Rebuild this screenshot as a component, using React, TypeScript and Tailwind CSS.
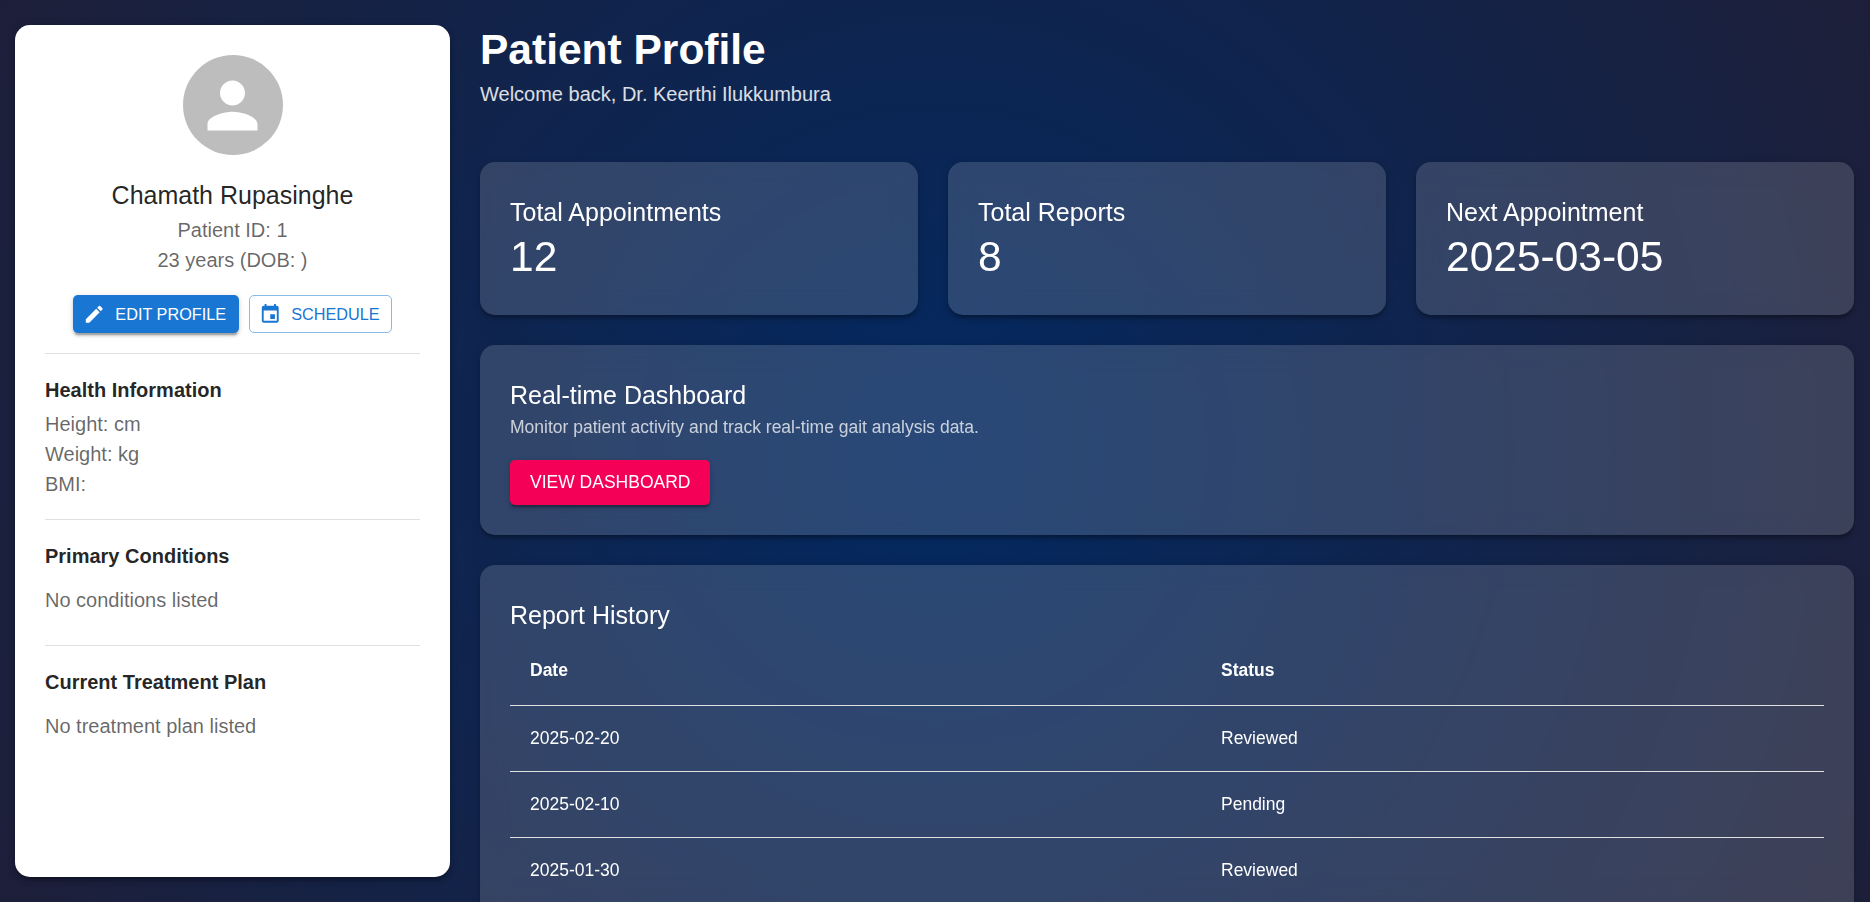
import React from "react";

const PAPER_SHADOW =
  "shadow-[0_3.75px_3.75px_-2.5px_rgba(0,0,0,0.2),0_3.75px_5px_0_rgba(0,0,0,0.14),0_1.25px_10px_0_rgba(0,0,0,0.12)]";
const BUTTON_SHADOW =
  "shadow-[0_3.75px_1.25px_-2.5px_rgba(0,0,0,0.2),0_2.5px_2.5px_0_rgba(0,0,0,0.14),0_1.25px_6.25px_0_rgba(0,0,0,0.12)]";

function Icon({ d, className }: { d: string; className: string }) {
  return (
    <svg viewBox="0 0 24 24" fill="currentColor" aria-hidden="true" className={className}>
      <path d={d} />
    </svg>
  );
}

const PERSON =
  "M12 12c2.21 0 4-1.79 4-4s-1.79-4-4-4-4 1.79-4 4 1.79 4 4 4m0 2c-2.67 0-8 1.34-8 4v2h16v-2c0-2.66-5.33-4-8-4";
const PENCIL =
  "M3 17.25V21h3.75L17.81 9.94l-3.75-3.75zM20.71 7.04c.39-.39.39-1.02 0-1.41l-2.34-2.34a.996.996 0 0 0-1.41 0l-1.83 1.83 3.75 3.75z";
const EVENT =
  "M17 12h-5v5h5zM16 1v2H8V1H6v2H5c-1.11 0-1.99.9-1.99 2L3 19c0 1.1.89 2 2 2h14c1.1 0 2-.9 2-2V5c0-1.1-.9-2-2-2h-1V1zm3 18H5V8h14z";

function Divider() {
  return <hr className="my-5 h-px shrink-0 border-0 bg-black/12" />;
}

function SectionTitle({ children }: { children: React.ReactNode }) {
  return (
    <h3 className="pb-[1.5px] text-[20px] font-bold leading-[33.5px] text-black/87">{children}</h3>
  );
}

function Sidebar() {
  return (
    <aside
      className={`h-[851.6px] w-[435px] shrink-0 rounded-[15px] bg-white p-[30px] text-[20px] leading-[30px] text-black/60 ${PAPER_SHADOW}`}
    >
      <div className="flex flex-col items-center">
        <div className="mb-5 flex size-[100px] items-center justify-center rounded-full bg-[#bdbdbd] text-white">
          <Icon d={PERSON} className="size-[75px]" />
        </div>
        <h2 className="text-[25px] leading-[40px] text-black/87">Chamath Rupasinghe</h2>
        <p>Patient ID: 1</p>
        <p>23 years (DOB: )</p>
        <div className="mt-5 flex gap-2.5 text-[16.25px] leading-[28px]">
          <button
            className={`flex items-center rounded-[5px] bg-[#1976d2] px-[12.5px] py-[5px] text-white ${BUTTON_SHADOW}`}
          >
            <Icon d={PENCIL} className="-ml-[2.5px] mr-2.5 size-[22.5px]" />
            EDIT PROFILE
          </button>
          <button className="flex items-center rounded-[5px] border border-[#1976d2]/50 px-[11.5px] py-[4px] text-[#1976d2]">
            <Icon d={EVENT} className="-ml-[2.5px] mr-2.5 size-[22.5px]" />
            SCHEDULE
          </button>
        </div>
      </div>
      <Divider />
      <SectionTitle>Health Information</SectionTitle>
      <p>Height: cm</p>
      <p>Weight: kg</p>
      <p>BMI:</p>
      <Divider />
      <SectionTitle>Primary Conditions</SectionTitle>
      <p className="py-2.5">No conditions listed</p>
      <Divider />
      <SectionTitle>Current Treatment Plan</SectionTitle>
      <p className="py-2.5">No treatment plan listed</p>
    </aside>
  );
}

function GlassCard({ children }: { children: React.ReactNode }) {
  return (
    <section
      className={`rounded-[15px] bg-white/15 p-[30px] text-white backdrop-blur-[12.5px] ${PAPER_SHADOW}`}
    >
      {children}
    </section>
  );
}

const STATS = [
  { label: "Total Appointments", value: "12" },
  { label: "Total Reports", value: "8" },
  { label: "Next Appointment", value: "2025-03-05" },
];

const REPORTS = [
  { date: "2025-02-20", status: "Reviewed" },
  { date: "2025-02-10", status: "Pending" },
  { date: "2025-01-30", status: "Reviewed" },
];

export default function App() {
  return (
    <div className="flex h-[902px] w-full gap-[30px] overflow-hidden bg-[radial-gradient(circle_at_center,#032961_0%,#1d1f39_100%)] pl-[15px] pr-4 pt-[25px] font-['Liberation_Sans',Arial,sans-serif]">
      <Sidebar />
      <main className="flex min-w-0 flex-1 flex-col gap-[30px]">
        <header className="mb-[24.9px]">
          <h1 className="pb-[2px] text-[42.5px] font-bold leading-[50.5px] text-white">
            Patient Profile
          </h1>
          <p className="pt-[2px] text-[20px] leading-[28px] text-white/85">
            Welcome back, Dr. Keerthi Ilukkumbura
          </p>
        </header>
        <div className="grid shrink-0 grid-cols-3 gap-[30px]">
          {STATS.map((s) => (
            <GlassCard key={s.label}>
              <h2 className="text-[25px] leading-[40px]">{s.label}</h2>
              <p className="pb-[2px] text-[42.5px] leading-[50.5px]">{s.value}</p>
            </GlassCard>
          ))}
        </div>
        <GlassCard>
          <h2 className="text-[25px] leading-[40px]">Real-time Dashboard</h2>
          <p className="text-[17.5px] leading-[25px] text-white/75">
            Monitor patient activity and track real-time gait analysis data.
          </p>
          <button
            className={`mt-5 block rounded-[5px] bg-[#f50057] px-5 pb-[8px] pt-[7px] text-[17.5px] leading-[30.6px] text-white ${BUTTON_SHADOW}`}
          >
            VIEW DASHBOARD
          </button>
        </GlassCard>
        <GlassCard>
          <h2 className="text-[25px] leading-[40px]">Report History</h2>
          <table className="w-full table-fixed border-collapse text-left text-[17.5px] leading-[25px]">
            <colgroup>
              <col className="w-[691px]" />
              <col />
            </colgroup>
            <thead>
              <tr className="border-b border-[#e0e0e0]">
                <th className="px-5 pb-[22px] pt-[23px] font-bold">Date</th>
                <th className="px-5 pb-[22px] pt-[23px] font-bold">Status</th>
              </tr>
            </thead>
            <tbody>
              {REPORTS.map((r) => (
                <tr key={r.date} className="border-b border-[#e0e0e0]">
                  <td className="px-5 pb-[20.5px] pt-[19.5px]">{r.date}</td>
                  <td className="px-5 pb-[20.5px] pt-[19.5px]">{r.status}</td>
                </tr>
              ))}
            </tbody>
          </table>
        </GlassCard>
      </main>
    </div>
  );
}
